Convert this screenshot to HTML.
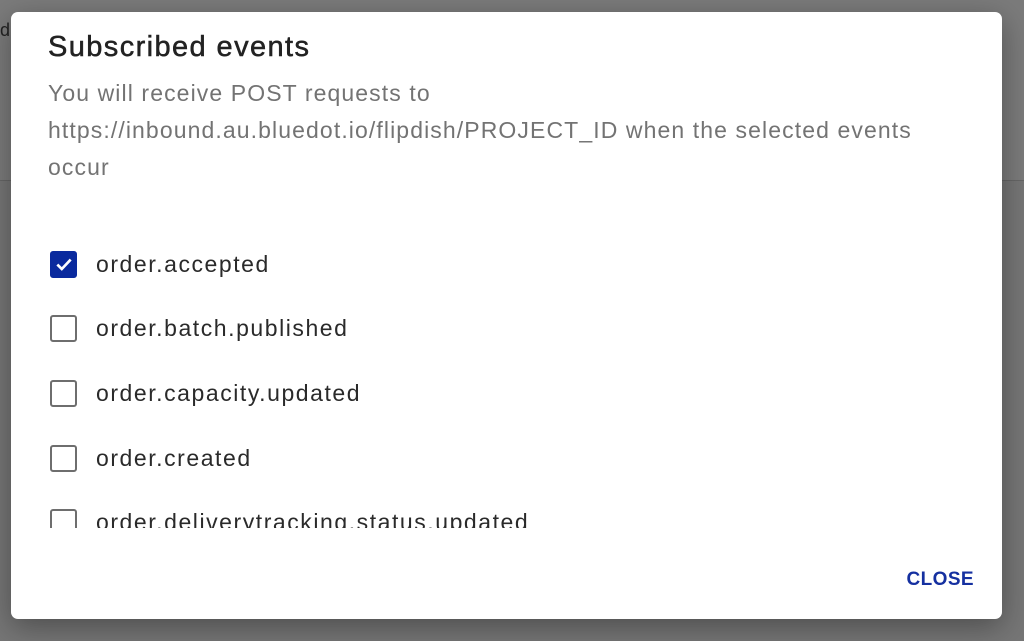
<html><head><style>
body{margin:0;width:1024px;height:641px;background:#767676;font-family:"Liberation Sans",sans-serif;position:relative;overflow:hidden}
.top{position:absolute;left:0;top:0;width:1024px;height:180px;background:#7b7b7b;border-bottom:1px solid #666}
.d{position:absolute;left:11px;top:12px;width:991px;height:607px;background:#fff;border-radius:7px;box-shadow:0 8px 30px rgba(0,0,0,.35)}
h1{position:absolute;left:37px;top:19px;margin:0;font-size:29px;letter-spacing:1.4px;font-weight:normal;color:#222;-webkit-text-stroke:.5px #222}
.p{position:absolute;left:37px;top:63px;width:940px;font-size:23px;letter-spacing:1.1px;line-height:37px;color:#737373;white-space:nowrap}
.list{position:absolute;left:0;top:210px;width:991px;height:306px;overflow:hidden}
.it{position:absolute;left:39px;height:30px;display:flex;align-items:center;font-size:23px;letter-spacing:1.55px;color:#2a2a2a}
.cb{width:27px;height:27px;border:2.5px solid #6e6e6e;border-radius:3px;box-sizing:border-box;margin-right:19px;flex:none}
.on{background:#0a2a9e;border-color:#0a2a9e;display:flex;align-items:center;justify-content:center}
.c{position:absolute;right:28px;bottom:28px;color:#1530a0;font-size:19px;font-weight:bold;letter-spacing:0.4px}
</style></head><body>
<div class="top"></div>
<div style="position:absolute;left:0;top:20px;font-size:18px;color:#222">d</div>
<div class="d">
<h1>Subscribed events</h1>
<div class="p">You will receive POST requests to<br>https://inbound.au.bluedot.io/flipdish/PROJECT_ID when the selected events<br>occur</div>
<div class="list">
<div class="it" style="top:27px"><div class="cb on"><svg width="20" height="20" viewBox="0 0 18 18"><path d="M3 9.5l4 4 8-8.5" stroke="#fff" stroke-width="2.4" fill="none"/></svg></div>order.accepted</div>
<div class="it" style="top:91px"><div class="cb"></div>order.batch.published</div>
<div class="it" style="top:156px"><div class="cb"></div>order.capacity.updated</div>
<div class="it" style="top:221px"><div class="cb"></div>order.created</div>
<div class="it" style="top:285px"><div class="cb"></div>order.deliverytracking.status.updated</div>
</div>
<div class="c">CLOSE</div>
</div>
</body></html>
